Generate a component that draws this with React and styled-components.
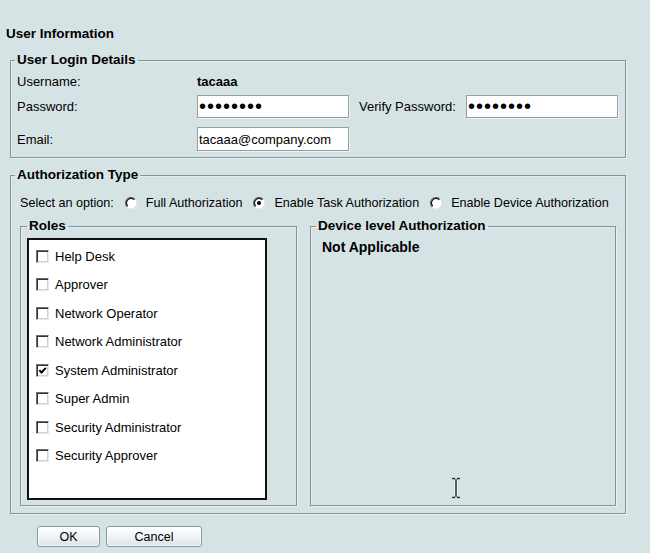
import React from "react";
import styled, { createGlobalStyle } from "styled-components";

const GlobalStyle = createGlobalStyle`
  html, body { margin: 0; padding: 0; background: #d6e3e5; }
  body { font-family: "Liberation Sans", Arial, sans-serif; color: #000; }
`;

const Page = styled.div`
  position: relative;
  width: 650px;
  height: 553px;
  box-sizing: border-box;
  padding: 26px 24px 0 10px;
  overflow: hidden;
  background: #d6e3e5;
`;

const Title = styled.div`
  margin: 0 0 10px -4px;
  font-weight: bold;
  font-size: 13.5px;
  line-height: 16px;
`;

const Group = styled.fieldset`
  margin: ${(p) => p.$margin || "0"};
  min-width: 0;
  padding: 0;
  border: 1px solid #889294;
  box-shadow: 1px 1px 0 rgba(255, 255, 255, 0.45), inset 1px 1px 0 rgba(255, 255, 255, 0.35);
`;

const Legend = styled.legend`
  margin-left: ${(p) => p.$offset}px;
  padding: 0 2px;
  font-weight: bold;
  font-size: 13.5px;
  line-height: 16px;
  color: #000;
`;

const GroupBody = styled.div`
  padding: ${(p) => p.$pad};
`;

const FormRow = styled.div`
  display: grid;
  grid-template-columns: 180px 152px 117px 152px;
  align-items: center;
  height: ${(p) => p.$h}px;
  margin-top: ${(p) => p.$mt || 0}px;
`;

const Label = styled.span`
  font-size: 13px;
  padding-left: ${(p) => p.$indent || 0}px;
  white-space: nowrap;
`;

const Value = styled.span`
  font-size: 13px;
  font-weight: bold;
`;

const TextInput = styled.input`
  box-sizing: border-box;
  width: 152px;
  height: ${(p) => p.$h}px;
  margin: 0;
  border: 1px solid #959fa2;
  box-shadow: 1px 1px 0 rgba(255, 255, 255, 0.6);
  background: #fff;
  font: ${(p) => (p.$secret ? "20px" : "13px")} "Liberation Sans", Arial, sans-serif;
  letter-spacing: ${(p) => (p.$secret ? "1px" : "0")};
  padding: 0 1px;
  color: #000;
  outline: none;
`;

const OptionRow = styled.div`
  display: flex;
  align-items: center;
  height: 20px;
  font-size: 12.6px;
  white-space: nowrap;
`;

const RadioMark = styled.svg`
  flex: none;
  width: 12px;
  height: 12px;
  margin: 0 9px 0 11px;
`;

const Panels = styled.div`
  display: grid;
  grid-template-columns: 277px 306px;
  column-gap: 13px;
  margin-top: 5px;
`;

const Listbox = styled.div`
  box-sizing: border-box;
  width: 240px;
  height: 262px;
  border: 2px solid #111;
  background: #fff;
  padding: 2px 0 0 7px;
`;

const RoleItem = styled.label`
  display: flex;
  align-items: center;
  gap: 6px;
  height: 28.5px;
  font-size: 13px;
  white-space: nowrap;
`;

const CheckBox = styled.span`
  box-sizing: border-box;
  flex: none;
  width: 13px;
  height: 13px;
  border: 1px solid;
  border-color: #6f6f6f #e8e8e8 #e8e8e8 #6f6f6f;
  box-shadow: inset 1px 1px 0 #333, inset -1px -1px 0 #d0d0d0;
  background: #fff;
  display: flex;
  align-items: center;
  justify-content: center;
`;

const Strong = styled.div`
  font-weight: bold;
  font-size: 14px;
  line-height: 16px;
`;

const ButtonRow = styled.div`
  display: flex;
  gap: 6px;
  margin-top: 12px;
  padding-left: 27px;
`;

const Button = styled.button`
  box-sizing: border-box;
  width: ${(p) => p.$w}px;
  height: 21px;
  margin: 0;
  padding: 0;
  border: 1px solid #8497a5;
  border-radius: 3px;
  background: linear-gradient(#ffffff 0%, #f1f5f7 45%, #d9e3e8 100%);
  box-shadow: inset 0 0 0 1px rgba(255, 255, 255, 0.7);
  font: 12.5px "Liberation Sans", Arial, sans-serif;
  color: #000;
`;

const Cursor = styled.svg`
  position: absolute;
  left: 450px;
  top: 477px;
  width: 12px;
  height: 22px;
`;

function Radio({ checked }) {
  return (
    <RadioMark viewBox="0 0 12 12">
      <circle cx="6" cy="6" r="5.5" fill="#fff" />
      <path d="M9.9 2.1 A5.5 5.5 0 0 0 2.1 9.9" fill="none" stroke="#6a6a6a" strokeWidth="1.1" />
      <path d="M9.2 2.8 A4.5 4.5 0 0 0 2.8 9.2" fill="none" stroke="#111" strokeWidth="1.2" />
      {checked && <circle cx="6" cy="6" r="2" fill="#000" />}
    </RadioMark>
  );
}

function Role({ name, checked }) {
  return (
    <RoleItem>
      <CheckBox>
        {checked && (
          <svg width="9" height="9" viewBox="0 0 9 9">
            <path d="M1.3 4.2 L3.5 6.5 L7.8 1.8" fill="none" stroke="#000" strokeWidth="1.9" />
          </svg>
        )}
      </CheckBox>
      {name}
    </RoleItem>
  );
}

const roles = [
  ["Help Desk", false],
  ["Approver", false],
  ["Network Operator", false],
  ["Network Administrator", false],
  ["System Administrator", true],
  ["Super Admin", false],
  ["Security Administrator", false],
  ["Security Approver", false],
];

export default function App() {
  return (
    <>
      <GlobalStyle />
      <Page>
        <Title>User Information</Title>

        <Group>
          <Legend $offset={4}>User Login Details</Legend>
          <GroupBody $pad="3px 7px 6px 6px">
            <FormRow $h={20}>
              <Label>Username:</Label>
              <Value>tacaaa</Value>
            </FormRow>
            <FormRow $h={23} $mt={4}>
              <Label>Password:</Label>
              <TextInput type="password" $secret $h={23} defaultValue="tacaaa12" readOnly />
              <Label $indent={10}>Verify Password:</Label>
              <TextInput type="password" $secret $h={23} defaultValue="tacaaa12" readOnly />
            </FormRow>
            <FormRow $h={24} $mt={9}>
              <Label>Email:</Label>
              <TextInput type="text" $h={24} defaultValue="tacaaa@company.com" readOnly />
            </FormRow>
          </GroupBody>
        </Group>

        <Group $margin="9px 0 0 0">
          <Legend $offset={4}>Authorization Type</Legend>
          <GroupBody $pad="10px 9px 7px 9px">
            <OptionRow>
              Select an option:
              <Radio />
              Full Authorization
              <Radio checked />
              Enable Task Authorization
              <Radio />
              Enable Device Authorization
            </OptionRow>
            <Panels>
              <Group>
                <Legend $offset={6}>Roles</Legend>
                <GroupBody $pad="4px 0 5px 6px">
                  <Listbox>
                    {roles.map(([name, checked]) => (
                      <Role key={name} name={name} checked={checked} />
                    ))}
                  </Listbox>
                </GroupBody>
              </Group>
              <Group>
                <Legend $offset={5}>Device level Authorization</Legend>
                <GroupBody $pad="5px 0 0 11px">
                  <Strong>Not Applicable</Strong>
                </GroupBody>
              </Group>
            </Panels>
          </GroupBody>
        </Group>

        <ButtonRow>
          <Button $w={63}>OK</Button>
          <Button $w={96}>Cancel</Button>
        </ButtonRow>

        <Cursor viewBox="0 0 12 22">
          <path
            d="M2 1.5 H5 M7 1.5 H10 M6 2 V20 M2 20.5 H5 M7 20.5 H10"
            fill="none"
            stroke="#fff"
            strokeWidth="3"
            opacity="0.6"
          />
          <path
            d="M2 1.5 H5 M7 1.5 H10 M6 2 V20 M2 20.5 H5 M7 20.5 H10"
            fill="none"
            stroke="#222"
            strokeWidth="1.4"
          />
        </Cursor>
      </Page>
    </>
  );
}
